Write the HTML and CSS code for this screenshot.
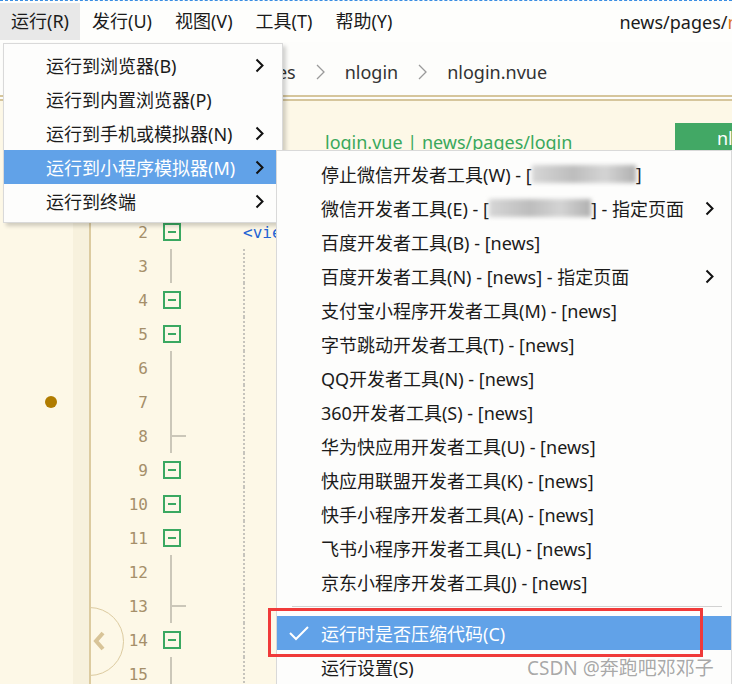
FILE: index.html
```html
<!DOCTYPE html>
<html lang="zh-CN">
<head>
    <meta charset="UTF-8">
    <meta name="viewport" content="width=device-width, initial-scale=1.0">
    <title>HBuilderX - 运行</title>
    <link rel="stylesheet" href="styles.css">
</head>
<body>
    <div class="window">
        <div class="menubar">
            <div class="menu-title active">运行(R)</div>
            <div class="menu-title">发行(U)</div>
            <div class="menu-title">视图(V)</div>
            <div class="menu-title">工具(T)</div>
            <div class="menu-title">帮助(Y)</div>
            <div class="file-path">news/pages/<span class="path-file">nlogin/nlogin.nvue</span></div>
        </div>

        <div class="breadcrumb">
            <span>news</span>
            <svg class="crumb-sep" width="9" height="16" viewBox="0 0 9 16"><polyline points="1,1 8,8 1,15" fill="none" stroke="#9a9a9a" stroke-width="1.3"/></svg>
            <span>pages</span>
            <svg class="crumb-sep" width="9" height="16" viewBox="0 0 9 16"><polyline points="1,1 8,8 1,15" fill="none" stroke="#9a9a9a" stroke-width="1.3"/></svg>
            <span>nlogin</span>
            <svg class="crumb-sep" width="9" height="16" viewBox="0 0 9 16"><polyline points="1,1 8,8 1,15" fill="none" stroke="#9a9a9a" stroke-width="1.3"/></svg>
            <span>nlogin.nvue</span>
        </div>

        <div class="editor">
            <div class="row head">
                <div class="side"></div>
                <div class="strip"></div>
                <div class="rule"></div>
                <div class="head-content">
                    <span class="head-title">login.vue | news/pages/login</span>
                    <span class="head-btn">nlogin</span>
                </div>
            </div>
            <div class="row"><div class="side"></div><div class="strip"></div><div class="rule"></div><div class="num">1</div><div></div><div class="fold box"></div><div class="code"><span class="tag">&lt;template&gt;</span></div></div>
            <div class="row"><div class="side"></div><div class="strip"></div><div class="rule"></div><div class="num">2</div><div></div><div class="fold box"></div><div class="code"><span class="tag indent">&lt;view class="content"&gt;</span></div></div>
            <div class="row"><div class="side"></div><div class="strip"></div><div class="rule"></div><div class="num">3</div><div></div><div class="fold line"></div><div class="code"><span class="guide"></span></div></div>
            <div class="row"><div class="side"></div><div class="strip"></div><div class="rule"></div><div class="num">4</div><div></div><div class="fold box"></div><div class="code"><span class="guide"></span></div></div>
            <div class="row"><div class="side"></div><div class="strip"></div><div class="rule"></div><div class="num">5</div><div></div><div class="fold box"></div><div class="code"><span class="guide"></span></div></div>
            <div class="row"><div class="side"></div><div class="strip"></div><div class="rule"></div><div class="num">6</div><div></div><div class="fold line"></div><div class="code"><span class="guide"></span></div></div>
            <div class="row"><div class="side"><span class="dot"></span></div><div class="strip"></div><div class="rule"></div><div class="num">7</div><div></div><div class="fold line"></div><div class="code"><span class="guide"></span></div></div>
            <div class="row"><div class="side"></div><div class="strip"></div><div class="rule"></div><div class="num">8</div><div></div><div class="fold line end"></div><div class="code"><span class="guide"></span></div></div>
            <div class="row"><div class="side"></div><div class="strip"></div><div class="rule"></div><div class="num">9</div><div></div><div class="fold box"></div><div class="code"><span class="guide"></span></div></div>
            <div class="row"><div class="side"></div><div class="strip"></div><div class="rule"></div><div class="num">10</div><div></div><div class="fold box"></div><div class="code"><span class="guide"></span></div></div>
            <div class="row"><div class="side"></div><div class="strip"></div><div class="rule"></div><div class="num">11</div><div></div><div class="fold box"></div><div class="code"><span class="guide"></span></div></div>
            <div class="row"><div class="side"></div><div class="strip"></div><div class="rule"></div><div class="num">12</div><div></div><div class="fold line"></div><div class="code"><span class="guide"></span></div></div>
            <div class="row"><div class="side"></div><div class="strip"></div><div class="rule"></div><div class="num">13</div><div></div><div class="fold line end"></div><div class="code"><span class="guide"></span></div></div>
            <div class="row"><div class="side"></div><div class="strip"></div><div class="rule"></div><div class="num">14</div><div></div><div class="fold box"></div><div class="code"><span class="guide"></span></div></div>
            <div class="row"><div class="side"></div><div class="strip"></div><div class="rule"></div><div class="num">15</div><div></div><div class="fold line"></div><div class="code"><span class="guide"></span></div></div>

            <div class="collapse-btn">
                <span class="collapse-ring"></span>
                <svg class="collapse-arrow" width="14" height="20" viewBox="0 0 14 20"><polyline points="11,2 4,10 11,18" fill="none" stroke="#d8c498" stroke-width="4"/></svg>
            </div>
        </div>

        <!-- 运行 menu -->
        <div class="dropdown run-menu">
            <div class="item">运行到浏览器(B)<svg class="arrow" width="9" height="15" viewBox="0 0 9 15"><polyline points="1.5,1.5 7.5,7.5 1.5,13.5" fill="none" stroke="#111" stroke-width="2"/></svg></div>
            <div class="item">运行到内置浏览器(P)</div>
            <div class="item">运行到手机或模拟器(N)<svg class="arrow" width="9" height="15" viewBox="0 0 9 15"><polyline points="1.5,1.5 7.5,7.5 1.5,13.5" fill="none" stroke="#111" stroke-width="2"/></svg></div>
            <div class="item selected">运行到小程序模拟器(M)<svg class="arrow" width="9" height="15" viewBox="0 0 9 15"><polyline points="1.5,1.5 7.5,7.5 1.5,13.5" fill="none" stroke="#111" stroke-width="2"/></svg></div>
            <div class="item">运行到终端<svg class="arrow" width="9" height="15" viewBox="0 0 9 15"><polyline points="1.5,1.5 7.5,7.5 1.5,13.5" fill="none" stroke="#111" stroke-width="2"/></svg></div>
        </div>

        <!-- 小程序模拟器 submenu -->
        <div class="dropdown mp-menu">
            <div class="item">停止微信开发者工具(W) - [<span class="blurred w1"></span>]</div>
            <div class="item">微信开发者工具(E) - [<span class="blurred w2"></span>] - 指定页面<svg class="arrow" width="9" height="15" viewBox="0 0 9 15"><polyline points="1.5,1.5 7.5,7.5 1.5,13.5" fill="none" stroke="#111" stroke-width="2"/></svg></div>
            <div class="item">百度开发者工具(B) - [news]</div>
            <div class="item">百度开发者工具(N) - [news] - 指定页面<svg class="arrow" width="9" height="15" viewBox="0 0 9 15"><polyline points="1.5,1.5 7.5,7.5 1.5,13.5" fill="none" stroke="#111" stroke-width="2"/></svg></div>
            <div class="item">支付宝小程序开发者工具(M) - [news]</div>
            <div class="item">字节跳动开发者工具(T) - [news]</div>
            <div class="item">QQ开发者工具(N) - [news]</div>
            <div class="item">360开发者工具(S) - [news]</div>
            <div class="item">华为快应用开发者工具(U) - [news]</div>
            <div class="item">快应用联盟开发者工具(K) - [news]</div>
            <div class="item">快手小程序开发者工具(A) - [news]</div>
            <div class="item">飞书小程序开发者工具(L) - [news]</div>
            <div class="item">京东小程序开发者工具(J) - [news]</div>
            <div class="separator"></div>
            <div class="item selected"><svg class="check" width="22" height="16" viewBox="0 0 22 16"><polyline points="2,8 8,14 20,2" fill="none" stroke="#fff" stroke-width="2"/></svg>运行时是否压缩代码(C)</div>
            <div class="item">运行设置(S)</div>
        </div>

        <div class="mark-box"></div>
        <div class="watermark">CSDN @奔跑吧邓邓子</div>
    </div>
</body>
</html>
```

FILE: styles.css
```css
body {
    margin: 0;
    background-color: #fdf8e7;
    font-family: "Noto Sans", "Noto Sans CJK SC", sans-serif;
    font-size: 18px;
    color: #1b1b1b;
}
.window {
    position: relative;
    width: 732px;
    height: 684px;
    overflow: hidden;
}

/* top menu bar */
.menubar {
    display: flex;
    align-items: center;
    height: 41px;
    border-top: 1px dashed #3a8de2;
    background-color: #fefefc;
    white-space: nowrap;
}
.menu-title {
    padding: 0 11px 0 11px;
    height: 37px;
    line-height: 37px;
}
.menu-title + .menu-title {
    padding-left: 12px;
}
.menu-title.active {
    background-color: #e8e8e8;
}
.file-path {
    margin-left: 216px;
    flex-shrink: 0;
}
.path-file {
    color: #e0761a;
}

/* breadcrumb */
.breadcrumb {
    display: flex;
    align-items: center;
    gap: 20px;
    height: 46px;
    padding-top: 7px;
    padding-left: 152px;
    background-color: #fdfdfb;
    color: #333;
    white-space: nowrap;
    border-bottom: 6px double #d6c69c;
}
.crumb-sep {
    flex-shrink: 0;
}

/* editor */
.editor {
    position: relative;
}
.row {
    display: grid;
    grid-template-columns: 73px 16px 2px 57px 15px 18px 1fr;
    height: 34px;
}
.row > div {
    display: flex;
    align-items: center;
}
.row.head {
    height: 80px;
}
.strip {
    background-color: #f7f1dd;
}
.rule {
    background-color: #dccba0;
}
.head-content {
    grid-column: 4 / 8;
    position: relative;
}
.head-title {
    color: #3aa85c;
    margin-left: 234px;
    margin-top: 2px;
    white-space: nowrap;
}
.head-btn {
    position: absolute;
    left: 584px;
    top: 22px;
    height: 30px;
    padding: 0 14px 0 42px;
    line-height: 30px;
    background-color: #42a865;
    color: #fff;
}
.num {
    justify-content: flex-end;
    font-family: "DejaVu Sans Mono", "Liberation Mono", monospace;
    font-size: 16px;
    color: #a58f6a;
}
.dot {
    width: 12px;
    height: 12px;
    margin-left: 45px;
    border-radius: 50%;
    background-color: #b07c00;
}
.fold {
    position: relative;
    justify-content: center;
}
.fold.box::before {
    content: "";
    width: 14px;
    height: 14px;
    border: 2px solid #3aa861;
}
.fold.box::after {
    content: "";
    position: absolute;
    left: 5px;
    top: 16px;
    width: 8px;
    height: 2px;
    background-color: #3aa861;
}
.fold.line::before {
    content: "";
    position: absolute;
    left: 7px;
    top: 0;
    bottom: 0;
    width: 2px;
    background-color: #cbc7b9;
}
.fold.end::after {
    content: "";
    position: absolute;
    left: 9px;
    top: 16px;
    width: 14px;
    height: 2px;
    background-color: #cbc7b9;
}
.code {
    align-items: stretch !important;
}
.tag {
    align-self: center;
    font-family: "DejaVu Sans Mono", "Liberation Mono", monospace;
    font-size: 16px;
    color: #2464d4;
    white-space: nowrap;
}
.tag.indent {
    margin-left: 62px;
}
.guide {
    margin-left: 62px;
    border-left: 2px dotted #c6c4bc;
}
.collapse-btn {
    position: absolute;
    left: 91px;
    top: 505px;
    width: 36px;
    height: 72px;
    overflow: hidden;
}
.collapse-ring {
    position: absolute;
    left: -36px;
    top: 1px;
    width: 67px;
    height: 67px;
    border: 1.5px solid #dccba0;
    border-radius: 50%;
}
.collapse-arrow {
    position: absolute;
    left: 1px;
    top: 25px;
}

/* dropdown menus */
.dropdown {
    position: absolute;
    background-color: #fdfdfc;
    border: 1px solid #d9d9d9;
    white-space: nowrap;
}
.dropdown .item {
    position: relative;
    display: flex;
    align-items: center;
    height: 34px;
}
.dropdown .item.selected {
    background-color: #61a2e8;
    color: #fff;
}
.arrow {
    position: absolute;
}
.run-menu {
    left: 3px;
    top: 43px;
    width: 278px;
    padding: 4px 0 4px;
    box-shadow: 3px 3px 4px rgba(0, 0, 0, 0.18);
    z-index: 2;
}
.run-menu .item {
    padding-left: 42px;
}
.run-menu .arrow {
    left: 251px;
}
.mp-menu {
    left: 276px;
    top: 150px;
    width: 454px;
    padding-top: 6px;
    z-index: 3;
}
.mp-menu .item {
    padding-left: 44px;
}
.mp-menu .arrow {
    left: 428px;
}
.separator {
    height: 1px;
    margin: 7px 9px 9px 15px;
    background-color: #d2d2d2;
}
.check {
    position: absolute;
    left: 11px;
}
.blurred {
    display: inline-block;
    height: 18px;
    background: linear-gradient(90deg, #d6d6d6, #bdbdbd 40%, #d4d4d4 70%, #b0b0b0);
    filter: blur(2px);
}
.blurred.w1 {
    width: 104px;
}
.blurred.w2 {
    width: 102px;
}

/* annotation */
.mark-box {
    position: absolute;
    left: 268px;
    top: 608px;
    width: 429px;
    height: 43px;
    border: 3px solid #f03a3a;
    z-index: 4;
}
.watermark {
    position: absolute;
    left: 527px;
    top: 653px;
    font-size: 19px;
    color: rgba(120, 120, 120, 0.65);
    z-index: 5;
}
```
